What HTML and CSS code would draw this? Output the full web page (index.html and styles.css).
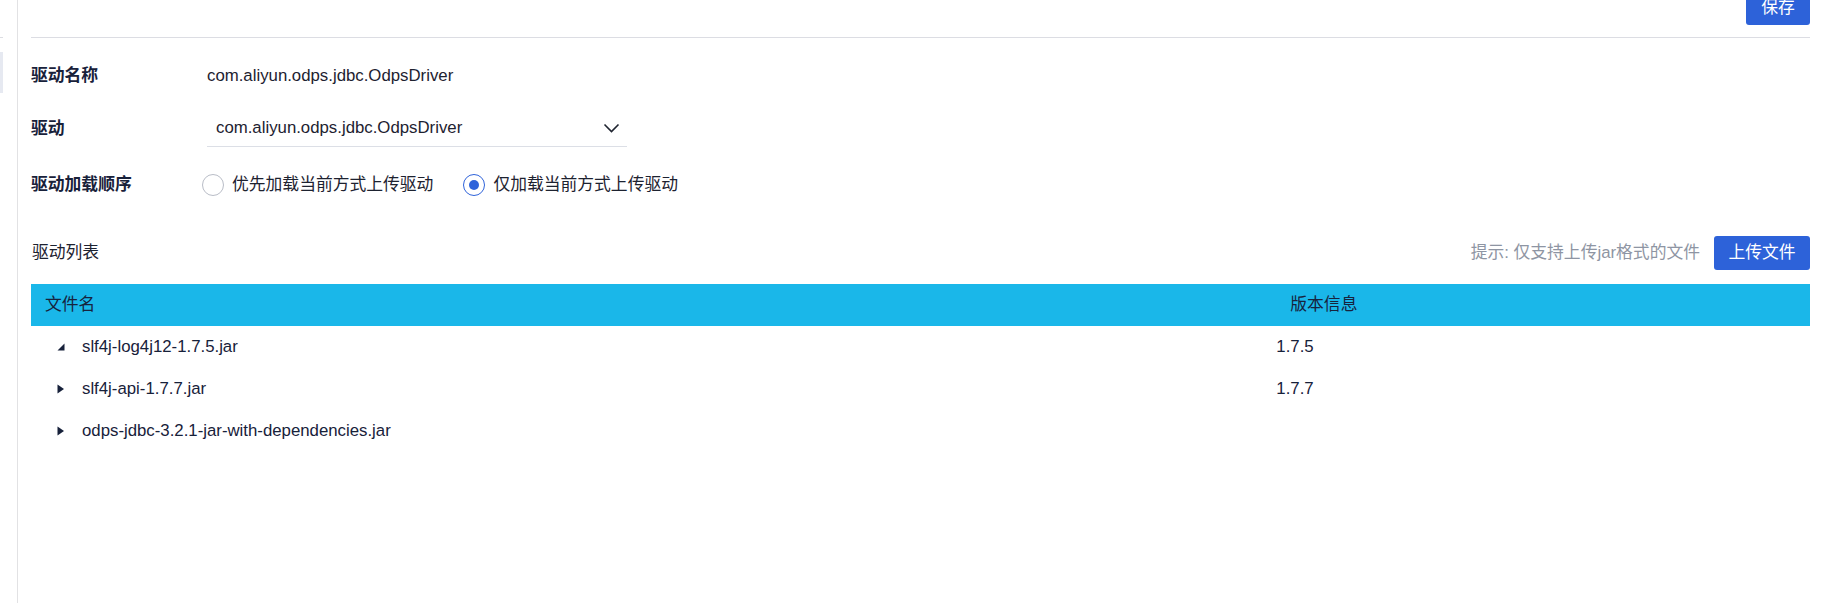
FILE: index.html
```html
<!DOCTYPE html>
<html lang="zh-CN">
<head>
<meta charset="utf-8">
<title>驱动</title>
<link rel="stylesheet" href="styles.css">
</head>
<body>
<div class="page">
  <aside class="sidebar">
    <div class="sb-line"></div>
    <div class="sb-active"></div>
  </aside>
  <main class="main">
    <div class="topbar">
      <button class="btn btn-save">保存</button>
    </div>
    <div class="form">
      <div class="form-row row-name">
        <div class="label">驱动名称</div>
        <div class="value">com.aliyun.odps.jdbc.OdpsDriver</div>
      </div>
      <div class="form-row row-driver">
        <div class="label">驱动</div>
        <div class="select">
          <span class="select-text">com.aliyun.odps.jdbc.OdpsDriver</span>
          <svg class="chevron" width="17" height="10" viewBox="0 0 17 10"><path d="M1.5 1.5 L8.5 8.5 L15.5 1.5" fill="none" stroke="#1f2430" stroke-width="1.6"/></svg>
        </div>
      </div>
      <div class="form-row row-order">
        <div class="label">驱动加载顺序</div>
        <div class="radios">
          <label class="radio"><span class="radio-circle"></span><span>优先加载当前方式上传驱动</span></label>
          <label class="radio checked"><span class="radio-circle"><span class="radio-dot"></span></span><span>仅加载当前方式上传驱动</span></label>
        </div>
      </div>
    </div>
    <div class="toolbar">
      <div class="toolbar-title">驱动列表</div>
      <div class="toolbar-right">
        <span class="hint">提示: 仅支持上传jar格式的文件</span>
        <button class="btn btn-upload">上传文件</button>
      </div>
    </div>
    <div class="table">
      <div class="tr thead">
        <div class="th th-name">文件名</div>
        <div class="th th-ver">版本信息</div>
      </div>
      <div class="tr">
        <div class="td td-name">
          <svg class="caret" width="8" height="10" viewBox="0 0 8 10"><path d="M7.5 1.5 L7.5 8.5 L0.5 8.5 Z" fill="#17213a"/></svg>
          <span>slf4j-log4j12-1.7.5.jar</span>
        </div>
        <div class="td td-ver">1.7.5</div>
      </div>
      <div class="tr">
        <div class="td td-name">
          <svg class="caret" width="8" height="10" viewBox="0 0 8 10"><path d="M0.5 0.5 L7 5 L0.5 9.5 Z" fill="#17213a"/></svg>
          <span>slf4j-api-1.7.7.jar</span>
        </div>
        <div class="td td-ver">1.7.7</div>
      </div>
      <div class="tr">
        <div class="td td-name">
          <svg class="caret" width="8" height="10" viewBox="0 0 8 10"><path d="M0.5 0.5 L7 5 L0.5 9.5 Z" fill="#17213a"/></svg>
          <span>odps-jdbc-3.2.1-jar-with-dependencies.jar</span>
        </div>
        <div class="td td-ver"></div>
      </div>
    </div>
  </main>
</div>
</body>
</html>
```

FILE: styles.css
```css
* { box-sizing: border-box; }
html, body { margin: 0; padding: 0; background: #ffffff; }
body {
  font-family: "Liberation Sans", Arial, "Noto Sans CJK SC", sans-serif;
  font-size: 16.8px;
  color: #1c2233;
  overflow: hidden;
}
.page { display: flex; height: 603px; }
.sidebar {
  width: 18px;
  flex: none;
  border-right: 1px solid #e2e2e4;
  display: flex;
  flex-direction: column;
}
.sb-line { margin-top: 37px; width: 3px; height: 1px; background: #dcdde2; }
.sb-active { margin-top: 14px; width: 3px; height: 41px; background: #e6e9f1; }
.main { flex: 1; padding: 0 11px 0 13px; min-width: 0; }

.topbar {
  height: 38px;
  border-bottom: 1px solid #dcdde3;
  display: flex;
  justify-content: flex-end;
  align-items: flex-start;
}
.btn {
  font-family: "Liberation Sans", Arial, "Noto Sans CJK SC", sans-serif;
  font-size: 16.8px;
  color: #ffffff;
  background: #2d62d9;
  border: none;
  border-radius: 3px;
  height: 34px;
  line-height: 34px;
  padding: 0;
  cursor: pointer;
}
.btn-save { width: 64px; margin-top: -9px; }
.btn-upload { width: 96px; }

.form { padding-top: 18px; }
.form-row { display: flex; align-items: center; }
.label {
  width: 176px;
  flex: none;
  font-weight: bold;
  color: #18213a;
  line-height: 20px;
}
.row-name { height: 40px; }
.row-name .value { color: #1d2230; line-height: 20px; }
.row-driver { height: 37px; margin-top: 14px; }
.select {
  width: 420px;
  height: 37px;
  border-bottom: 1px solid #dcdfe6;
  display: flex;
  align-items: center;
  justify-content: space-between;
  padding: 0 7px 0 9px;
}
.select-text { color: #1d2230; line-height: 20px; }
.chevron { display: block; }
.row-order { height: 40px; margin-top: 18px; }
.radios { display: flex; align-items: center; margin-left: -5px; gap: 30px; }
.radio { display: flex; align-items: center; gap: 8px; color: #1d2230; line-height: 20px; }
.radio-circle {
  width: 22px;
  height: 22px;
  border: 1px solid #b9bdc7;
  border-radius: 50%;
  display: flex;
  align-items: center;
  justify-content: center;
}
.radio.checked .radio-circle { border-color: #2f63da; }
.radio-dot { width: 10px; height: 10px; border-radius: 50%; background: #2f63da; }

.toolbar {
  margin-top: 31px;
  height: 34px;
  display: flex;
  align-items: center;
  justify-content: space-between;
}
.toolbar-title { color: #1d2230; line-height: 20px; padding-left: 1px; }
.toolbar-right { display: flex; align-items: center; gap: 14px; }
.hint { color: #8e95a3; line-height: 20px; }

.table { margin-top: 14px; }
.tr { display: grid; grid-template-columns: 70% 30%; height: 42px; align-items: center; }
.thead { background: #1ab7e9; }
.th { color: #17233d; line-height: 20px; padding-left: 14px; }
.td { color: #17213a; line-height: 20px; }
.td-name { display: flex; align-items: center; padding-left: 26px; gap: 17px; }
.caret { display: block; flex: none; }
```
